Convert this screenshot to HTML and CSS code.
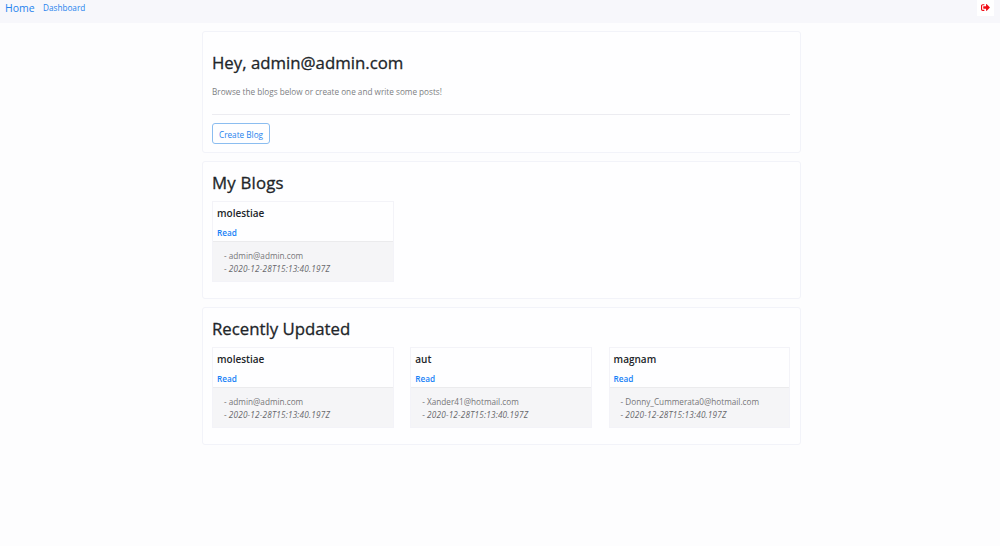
FILE: index.html
```html
<!DOCTYPE html>
<html lang="en">
<head>
<meta charset="utf-8">
<title>Dashboard</title>
<link rel="stylesheet" href="styles.css">
</head>
<body>
<nav class="navbar">
  <a class="brand">Home</a>
  <a class="nav-link">Dashboard</a>
  <button class="logout" aria-label="Log out">
    <svg viewBox="0 0 512 512"><path d="M497 273L329 441c-15 15-41 4.500-41-17v-96H152c-13.300 0-24-10.700-24-24v-96c0-13.300 10.700-24 24-24h136V88c0-21.400 25.900-32 41-17l168 168c9.300 9.400 9.300 24.600 0 34zM192 436v-40c0-6.600-5.400-12-12-12H96c-17.700 0-32-14.300-32-32V160c0-17.700 14.300-32 32-32h84c6.600 0 12-5.400 12-12V76c0-6.600-5.400-12-12-12H96c-53 0-96 43-96 96v192c0 53 43 96 96 96h84c6.600 0 12-5.400 12-12z"/></svg>
  </button>
</nav>
<main class="container">
  <section class="panel intro">
    <h1 class="title greeting">Hey, admin@admin.com</h1>
    <p class="lead">Browse the blogs below or create one and write some posts!</p>
    <hr class="divider">
    <button class="create">Create Blog</button>
  </section>
  <section class="panel blogs">
    <h2 class="title my">My Blogs</h2>
    <div class="grid">
      <article class="card">
        <div class="card-body"><h3 class="name">molestiae</h3><a class="read">Read</a></div>
        <footer class="meta"><div class="owner">- admin@admin.com</div><div class="date">- <em>2020-12-28T15:13:40.197Z</em></div></footer>
      </article>
    </div>
  </section>
  <section class="panel blogs">
    <h2 class="title recent">Recently Updated</h2>
    <div class="grid">
      <article class="card">
        <div class="card-body"><h3 class="name">molestiae</h3><a class="read">Read</a></div>
        <footer class="meta"><div class="owner">- admin@admin.com</div><div class="date">- <em>2020-12-28T15:13:40.197Z</em></div></footer>
      </article>
      <article class="card">
        <div class="card-body"><h3 class="name">aut</h3><a class="read">Read</a></div>
        <footer class="meta"><div class="owner">- Xander41@hotmail.com</div><div class="date">- <em>2020-12-28T15:13:40.197Z</em></div></footer>
      </article>
      <article class="card">
        <div class="card-body"><h3 class="name">magnam</h3><a class="read">Read</a></div>
        <footer class="meta"><div class="owner">- Donny_Cummerata0@hotmail.com</div><div class="date">- <em>2020-12-28T15:13:40.197Z</em></div></footer>
      </article>
    </div>
  </section>
</main>
</body>
</html>
```
FILE: styles.css
```css
* { box-sizing: border-box; }
body { margin: 0; height: 546px; overflow: hidden; background: #fdfdfe; color: #212529; font: 8.5px/13px "Open Sans", "Noto Sans", sans-serif; }
h1, h2, h3, p { margin: 0; }
.navbar { display: flex; height: 23px; padding: 0 6px 0 5px; background: #f7f7fb; color: #2583ee; }
.brand { width: 38px; font-size: 10.5px; line-height: 16px; }
.nav-link { line-height: 16px; font-size: 8.2px; }
.logout { display: flex; align-items: center; justify-content: center; width: 17px; height: 16px; margin-left: auto; padding: 0 0 2px; border: 0; background: #fff; }
.logout svg { width: 9px; height: 9px; fill: #f10b15; }
.container { display: flex; flex-direction: column; gap: 8px; width: 599px; margin: 8px 0 0 202px; }
.panel { height: 138px; padding: 8px 9px; background: #fefeff; border: 1px solid #f2f3f9; border-radius: 3px; }
.intro { height: 122px; padding-top: 19px; }
.title { font-size: 16.8px; line-height: 24px; font-weight: 500; white-space: nowrap; -webkit-text-stroke: .3px #212529; }
.my { letter-spacing: .2px; }
.lead { margin-top: 10px; font-size: 8.2px; color: #7d7f83; }
.divider { height: 1px; width: 578px; margin: 16px 0 8px; border: 0; background: #ececf1; }
.create { display: block; width: 58px; height: 21px; padding: 1px 0 0; border: 1px solid #8bbdf0; border-radius: 3px; background: #fefeff; color: #2583ee; font: inherit; font-size: 8.2px; }
.blogs .title { margin-top: 1px; }
.grid { display: grid; grid-template-columns: repeat(3, 181.5px); column-gap: 16.8px; margin-top: 6px; }
.card { height: 81px; border: 1px solid #f3f3f8; background: #fefeff; }
.card-body { height: 39px; padding: 4px 4px 0; }
.name { font-size: 10px; line-height: 14px; font-weight: 600; }
.read { display: block; margin-top: 6px; color: #1681f7; font-weight: 600; font-size: 8.2px; }
.meta { height: 40px; padding: 7px 11px 0; background: #f5f5f7; border-top: 1px solid #ebebed; color: #757579; font-size: 8.2px; }
.meta em { color: #68686c; letter-spacing: .2px; }
```
